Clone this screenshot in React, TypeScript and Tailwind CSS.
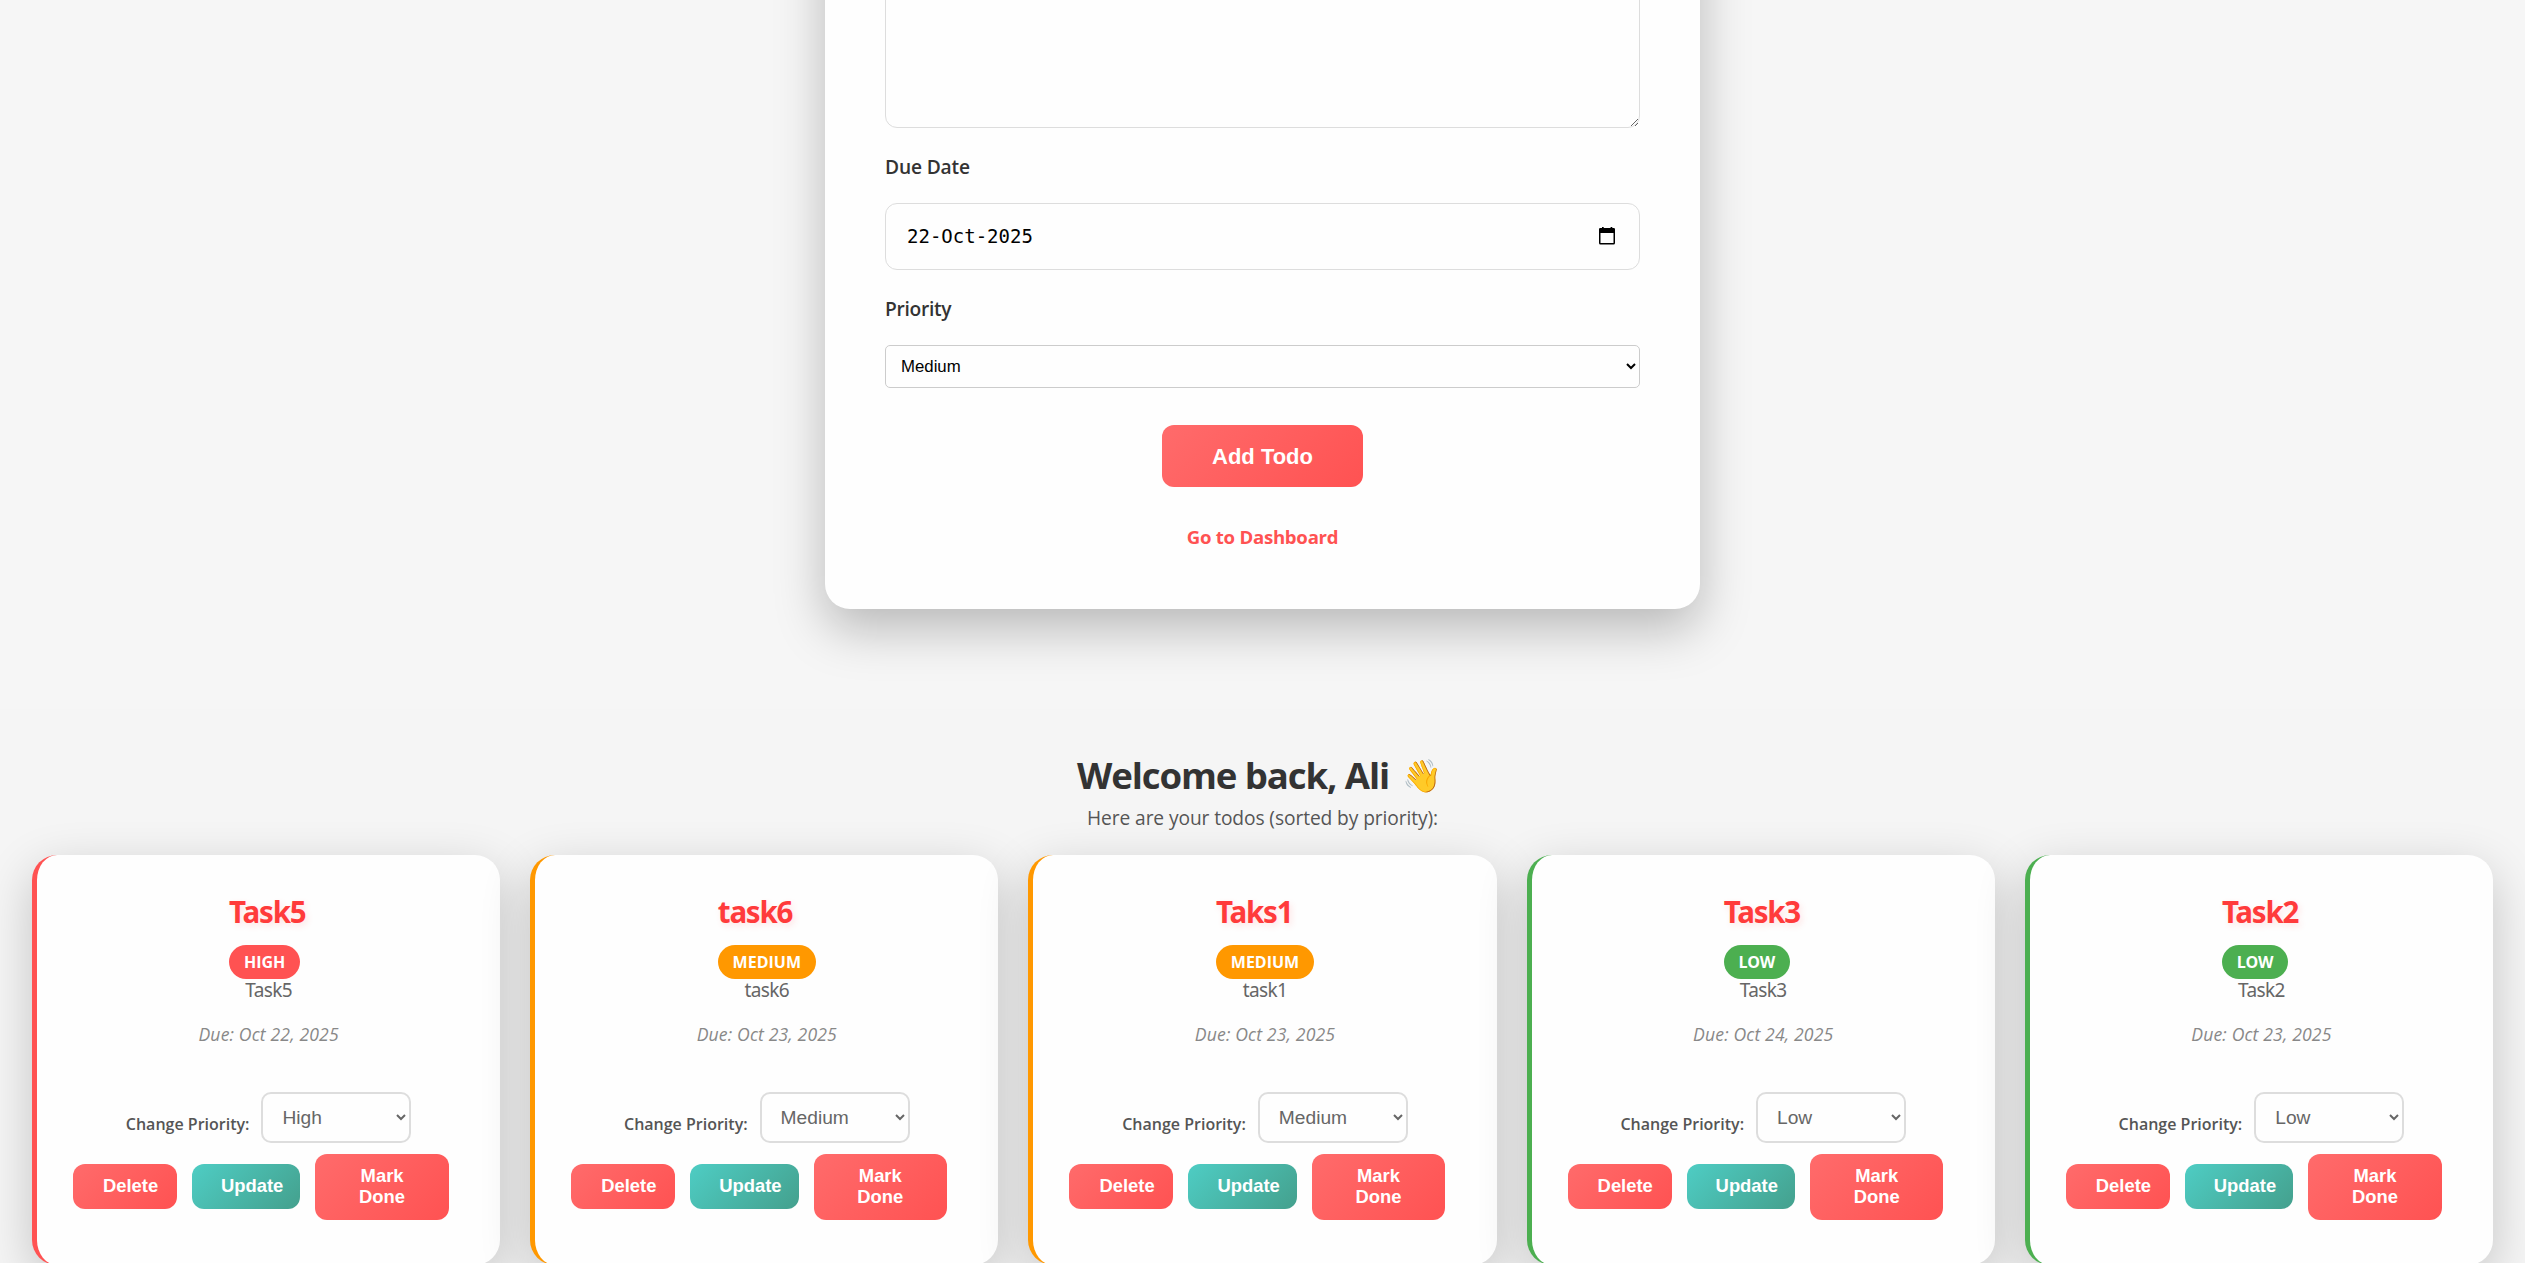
type Priority = "High" | "Medium" | "Low";

interface Todo {
  title: string;
  description: string;
  due: string;
  priority: Priority;
}

const todos: Todo[] = [
  { title: "Task5", description: "Task5", due: "Oct 22, 2025", priority: "High" },
  { title: "task6", description: "task6", due: "Oct 23, 2025", priority: "Medium" },
  { title: "Taks1", description: "task1", due: "Oct 23, 2025", priority: "Medium" },
  { title: "Task3", description: "Task3", due: "Oct 24, 2025", priority: "Low" },
  { title: "Task2", description: "Task2", due: "Oct 23, 2025", priority: "Low" },
];

const borderColor: Record<Priority, string> = {
  High: "border-[#ff5252]",
  Medium: "border-[#ff9800]",
  Low: "border-[#4caf50]",
};

const badgeStyle: Record<Priority, string> = {
  High: "w-[71px] bg-[#ff5252]",
  Medium: "w-[98px] bg-[#ff9800]",
  Low: "w-[66px] bg-[#4caf50] tracking-[-0.3px]",
};

function CalendarIcon() {
  return (
    <svg width="16" height="18" viewBox="0 0 16 18" fill="none" aria-hidden="true">
      <path d="M3 0h1.7v2H3zM11.6 0h1.7v2h-1.7z" fill="#000" />
      <path d="M1.2 1h13.6A1.2 1.2 0 0 1 16 2.2V6H0V2.2A1.2 1.2 0 0 1 1.2 1z" fill="#000" />
      <path d="M.75 5v11q0 .75.75.75h13q.75 0 .75-.75V5" stroke="#000" strokeWidth="1.5" />
    </svg>
  );
}

function PriorityOptions() {
  return (
    <>
      <option>High</option>
      <option>Medium</option>
      <option>Low</option>
    </>
  );
}

function TodoForm() {
  return (
    <section className="mx-auto -mt-[200px] flex h-[809px] w-[875px] shrink-0 flex-col rounded-[25px] bg-[#fefefe] px-[60px] pt-[60px] shadow-[0_20px_50px_rgba(0,0,0,0.25)]">
      <textarea className="block h-[268px] w-full shrink-0 resize rounded-xl border border-[#dddddd]" />
      <label className="mt-[26px] text-[19.2px] leading-[26px] font-semibold tracking-[-0.15px] text-[#333333]">
        Due Date
      </label>
      <div className="mt-[23px] flex h-[67px] items-center justify-between rounded-xl border border-[#dddddd] pr-6 pl-[21px]">
        <span className="font-['DejaVu_Sans_Mono',monospace] text-[19px] text-black">22-Oct-2025</span>
        <span className="-mt-px">
          <CalendarIcon />
        </span>
      </div>
      <label className="mt-[26px] text-[19.2px] leading-[26px] font-semibold tracking-[-0.3px] text-[#333333]">
        Priority
      </label>
      <select
        defaultValue="Medium"
        className="mt-[23px] h-[43px] w-full shrink-0 rounded-[5px] border border-[#cccccc] bg-[#fefefe] px-[11px] font-['Liberation_Sans',Arial,sans-serif] text-[16.8px] text-black"
      >
        <PriorityOptions />
      </select>
      <button className="mx-auto mt-[37px] h-[62px] w-[201px] shrink-0 rounded-xl bg-[linear-gradient(135deg,#ff6b6b,#ff5252)] font-['Liberation_Sans',Arial,sans-serif] text-[22px] font-bold text-white">
        Add Todo
      </button>
      <a className="mt-[37px] text-center text-[18.6px] leading-[26px] font-bold tracking-[-0.25px] text-[#ff5252]">
        Go to Dashboard
      </a>
    </section>
  );
}

function TodoCard({ todo }: { todo: Todo }) {
  return (
    <article
      className={`flex h-[410px] flex-1 flex-col items-center rounded-[25px] border-l-[5px] bg-[#fefefe] pt-[35px] shadow-[0_15px_50px_rgba(0,0,0,0.2)] ${borderColor[todo.priority]}`}
    >
      <div className="flex min-w-[79px] flex-col items-start">
        <h3 className="font-['Noto_Sans',sans-serif] text-[29.5px] leading-[44px] font-bold tracking-[-1.2px] text-[#ff3b3b] [text-shadow:2px_3px_6px_rgba(255,82,82,0.15)]">
          {todo.title}
        </h3>
        <span
          className={`mt-[11px] flex h-[34px] items-center justify-center rounded-full pb-px text-base leading-5 font-bold text-white ${badgeStyle[todo.priority]}`}
        >
          {todo.priority.toUpperCase()}
        </span>
      </div>
      <p className="-mt-px font-['Noto_Sans',sans-serif] text-[19px] leading-[25px] tracking-[-0.6px] text-[#666666]">
        {todo.description}
      </p>
      <p className="mt-[19px] text-[17.6px] leading-6 tracking-[0.15px] text-[#888888] italic">Due: {todo.due}</p>
      <div className="mt-[46px] flex">
        <label className="mt-5 text-base leading-6 font-semibold text-[#555555]">Change Priority:</label>
        <select
          defaultValue={todo.priority}
          className="ml-3 h-[51px] w-[150px] rounded-[10px] border-2 border-[#dddddd] bg-[#fefefe] px-[15px] font-['Liberation_Sans',Arial,sans-serif] text-[19.2px] text-[#666666]"
        >
          <PriorityOptions />
        </select>
      </div>
      <div className="mt-[11px] ml-9 flex items-center gap-[15px] self-start font-['Liberation_Sans',Arial,sans-serif] text-[18.4px] leading-[21px] font-bold text-white">
        <button className="mb-px h-[45px] w-[104px] rounded-xl bg-[linear-gradient(135deg,#ff6b6b,#ff5252)] pb-[3px] pl-[30px] text-left">
          Delete
        </button>
        <button className="mb-px h-[45px] w-[108.4px] rounded-xl bg-[linear-gradient(135deg,#4ecdc4,#44a08d)] pb-[3px] pl-[29px] text-left">
          Update
        </button>
        <button className="h-[66px] w-[133.4px] rounded-xl bg-[linear-gradient(135deg,#ff6b6b,#ff5252)] px-[30px] pb-0.5">
          Mark Done
        </button>
      </div>
    </article>
  );
}

export default function App() {
  return (
    <div className="flex h-[1263px] w-full flex-col overflow-hidden bg-[#f6f6f6] font-['Open_Sans','Noto_Sans',sans-serif]">
      <TodoForm />
      <main className="mt-[100px] shrink-0 bg-[#f5f5f5] px-8 pt-[41px]">
        <h1 className="flex items-center justify-center pr-1.5 leading-[50px] font-bold text-[#333333]">
          <span className="text-[36.6px] tracking-[-1.1px]">Welcome back, Ali</span>
          <span className="ml-[13px] text-[32px]">👋</span>
        </h1>
        <p className="mt-[5px] text-center text-[19.2px] leading-[26px] tracking-[-0.1px] text-[#555555]">
          Here are your todos (sorted by priority):
        </p>
        <div className="mt-6 flex gap-[30px]">
          {todos.map((todo) => (
            <TodoCard key={todo.title} todo={todo} />
          ))}
        </div>
      </main>
    </div>
  );
}
